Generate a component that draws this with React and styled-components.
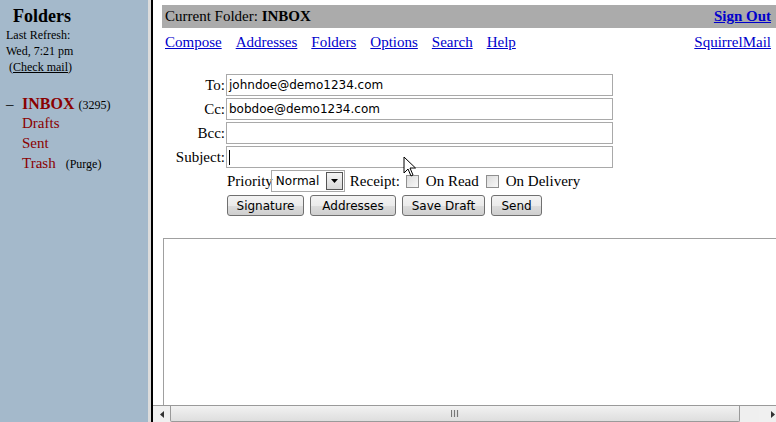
import React from "react";
import styled, { createGlobalStyle } from "styled-components";

const Global = createGlobalStyle`
  html, body { margin: 0; padding: 0; background: #fff; }
  body { font-family: "Liberation Serif", "Times New Roman", serif; color: #000; }
`;

const Page = styled.div`
  position: relative;
  display: flex;
  width: 776px;
  height: 422px;
  overflow: hidden;
`;

const Sidebar = styled.div`
  width: 148px;
  flex: none;
  background: #a4b9cb;
  padding: 5px 0 0 6px;
  box-sizing: border-box;
`;

const SideTitle = styled.div`
  font-weight: bold;
  font-size: 18px;
  padding-left: 7px;
  line-height: 22px;
`;

const Small = styled.div`
  font-size: 12px;
  line-height: 16px;
  padding-left: ${(p) => p.$indent || 0}px;
`;

const CheckLink = styled.a`
  color: #000;
  text-decoration: underline;
`;

const FolderList = styled.div`
  margin-top: 20px;
  display: flex;
  flex-direction: column;
`;

const FolderRow = styled.div`
  display: flex;
  align-items: baseline;
  height: 20px;
  padding-left: ${(p) => (p.$current ? 0 : 16)}px;
`;

const Dash = styled.span`
  font-size: 15px;
  width: 16px;
`;

const FolderName = styled.span`
  color: #8a0000;
  font-size: ${(p) => (p.$current ? 16 : 15)}px;
  font-weight: ${(p) => (p.$current ? "bold" : "normal")};
`;

const Note = styled.span`
  font-size: 12px;
  margin-left: ${(p) => p.$gap || 4}px;
`;

const Divider = styled.div`
  flex: none;
  width: 5px;
  border-left: 3px solid #dcdcdc;
  box-sizing: border-box;
  background: #000;
`;

const Main = styled.div`
  flex: 1;
  display: flex;
  flex-direction: column;
  overflow: hidden;
  min-width: 0;
`;

const MainBody = styled.div`
  flex: 1;
  padding: 5px 0 0 9px;
  display: flex;
  flex-direction: column;
  min-height: 0;
`;

const TopBar = styled.div`
  background: #ababab;
  height: 23px;
  display: flex;
  align-items: center;
  justify-content: space-between;
  padding: 0 5px 0 3px;
  font-size: 15px;
`;

const SignOut = styled.a`
  color: #0000cc;
  font-weight: bold;
  text-decoration: underline;
`;

const NavRow = styled.div`
  display: flex;
  justify-content: space-between;
  padding: 3px 5px 0 3px;
  height: 22px;
  align-items: center;
  font-size: 15px;
`;

const NavLinks = styled.div`
  display: flex;
  gap: 14px;
`;

const NavLink = styled.a`
  color: #0000cc;
  text-decoration: underline;
`;

const Form = styled.div`
  margin-top: 21px;
  display: grid;
  grid-template-columns: 64px 387px;
  row-gap: 2px;
  align-items: center;
`;

const Label = styled.div`
  text-align: right;
  font-size: 15px;
  padding-right: 1px;
`;

const Field = styled.div`
  height: 22px;
  border: 1px solid #a9a9a9;
  box-sizing: border-box;
  font-family: "DejaVu Sans", Verdana, sans-serif;
  font-size: 12px;
  display: flex;
  align-items: center;
  padding-left: 2px;
  background: #fff;
`;

const Caret = styled.span`
  width: 1px;
  height: 15px;
  background: #000;
`;

const OptionsRow = styled.div`
  grid-column: 2;
  display: flex;
  align-items: center;
  font-size: 15px;
  padding-left: 1px;
  height: 22px;
`;

const Select = styled.div`
  margin-left: -2px;
  width: 74px;
  height: 22px;
  box-sizing: border-box;
  border: 1px solid #a9a9a9;
  display: flex;
  align-items: center;
  justify-content: space-between;
  padding: 0 1px 0 4px;
  font-family: "DejaVu Sans", Verdana, sans-serif;
  font-size: 12px;
  margin-right: 5px;
`;

const DropBtn = styled.div`
  width: 15px;
  height: 16px;
  border: 1px solid #555;
  background: linear-gradient(#f4f4f4, #d8d8d8);
  display: flex;
  align-items: center;
  justify-content: center;
`;

const Check = styled.span`
  width: 11px;
  height: 11px;
  border: 1px solid #8f8f8f;
  background: linear-gradient(135deg, #dcdcdc, #f8f8f8);
  margin: 0 ${(p) => p.$right || 7}px 0 ${(p) => p.$left || 6}px;
  flex: none;
`;

const ButtonRow = styled.div`
  grid-column: 2;
  display: flex;
  gap: 6px;
  padding-left: 1px;
  margin-top: 1px;
`;

const Button = styled.div`
  width: ${(p) => p.$w}px;
  height: 21px;
  box-sizing: border-box;
  border: 1px solid #707070;
  border-radius: 3px;
  background: linear-gradient(#f3f3f3 0%, #ebebeb 50%, #dddddd 51%, #cfcfcf 100%);
  font-family: "DejaVu Sans", Verdana, sans-serif;
  font-size: 12px;
  display: flex;
  align-items: center;
  justify-content: center;
`;

const TextArea = styled.div`
  margin: 22px 0 0 1px;
  flex: 1;
  border: 1px solid #a0a0a0;
  border-right: none;
  border-bottom: none;
`;

const HScroll = styled.div`
  flex: none;
  height: 17px;
  display: flex;
  background: #efefef;
  border-top: 1px solid #9a9a9a;
  box-sizing: border-box;
`;

const ArrowBtn = styled.div`
  width: 17px;
  flex: none;
  display: flex;
  align-items: center;
  justify-content: center;
  background: #f0f0f0;
`;

const Thumb = styled.div`
  width: 570px;
  flex: none;
  border: 1px solid #9a9a9a;
  border-top: none;
  border-radius: 0 0 2px 2px;
  box-sizing: border-box;
  background: linear-gradient(#f2f2f2, #dedede);
  display: flex;
  align-items: center;
  justify-content: center;
`;

const Track = styled.div`
  flex: 1;
  display: flex;
  justify-content: flex-end;
`;

const Cursor = styled.svg`
  position: absolute;
  left: 403px;
  top: 156px;
`;

export default function App() {
  return (
    <>
      <Global />
      <Page>
        <Sidebar>
          <SideTitle>Folders</SideTitle>
          <Small>Last Refresh:</Small>
          <Small>Wed, 7:21 pm</Small>
          <Small $indent={3}>
            (<CheckLink>Check mail</CheckLink>)
          </Small>
          <FolderList>
            <FolderRow $current>
              <Dash>–</Dash>
              <FolderName $current>INBOX</FolderName>
              <Note>(3295)</Note>
            </FolderRow>
            <FolderRow>
              <FolderName>Drafts</FolderName>
            </FolderRow>
            <FolderRow>
              <FolderName>Sent</FolderName>
            </FolderRow>
            <FolderRow>
              <FolderName>Trash</FolderName>
              <Note $gap={10}>(Purge)</Note>
            </FolderRow>
          </FolderList>
        </Sidebar>
        <Divider />
        <Main>
          <MainBody>
            <TopBar>
              <span>
                Current Folder: <b>INBOX</b>
              </span>
              <SignOut>Sign Out</SignOut>
            </TopBar>
            <NavRow>
              <NavLinks>
                <NavLink>Compose</NavLink>
                <NavLink>Addresses</NavLink>
                <NavLink>Folders</NavLink>
                <NavLink>Options</NavLink>
                <NavLink>Search</NavLink>
                <NavLink>Help</NavLink>
              </NavLinks>
              <NavLink>SquirrelMail</NavLink>
            </NavRow>
            <Form>
              <Label>To:</Label>
              <Field>johndoe@demo1234.com</Field>
              <Label>Cc:</Label>
              <Field>bobdoe@demo1234.com</Field>
              <Label>Bcc:</Label>
              <Field />
              <Label>Subject:</Label>
              <Field>
                <Caret />
              </Field>
              <OptionsRow>
                Priority
                <Select>
                  Normal
                  <DropBtn>
                    <svg width="7" height="4" viewBox="0 0 7 4">
                      <path d="M0 0h7L3.5 4z" fill="#000" />
                    </svg>
                  </DropBtn>
                </Select>
                Receipt:
                <Check $left={6} $right={7} />
                On Read
                <Check $left={7} $right={7} />
                On Delivery
              </OptionsRow>
              <ButtonRow>
                <Button $w={77}>Signature</Button>
                <Button $w={86}>Addresses</Button>
                <Button $w={83}>Save Draft</Button>
                <Button $w={51}>Send</Button>
              </ButtonRow>
            </Form>
            <TextArea />
          </MainBody>
          <HScroll>
            <ArrowBtn>
              <svg width="4" height="7" viewBox="0 0 4 7">
                <path d="M4 0v7L0 3.5z" fill="#333" />
              </svg>
            </ArrowBtn>
            <Thumb>
              <svg width="8" height="7" viewBox="0 0 8 7">
                <path d="M0.5 0v7M3.5 0v7M6.5 0v7" stroke="#777" strokeWidth="1.2" />
              </svg>
            </Thumb>
            <Track>
              <ArrowBtn>
                <svg width="4" height="7" viewBox="0 0 4 7" style={{ marginLeft: 10 }}>
                  <path d="M0 0v7L4 3.5z" fill="#333" />
                </svg>
              </ArrowBtn>
            </Track>
          </HScroll>
        </Main>
        <Cursor width="14" height="22" viewBox="0 0 14 22">
          <path
            d="M1 1v16l4-4 3 7 2-1-3-7h5.5z"
            fill="#fff"
            stroke="#000"
            strokeWidth="1"
            strokeLinejoin="round"
          />
        </Cursor>
      </Page>
    </>
  );
}
